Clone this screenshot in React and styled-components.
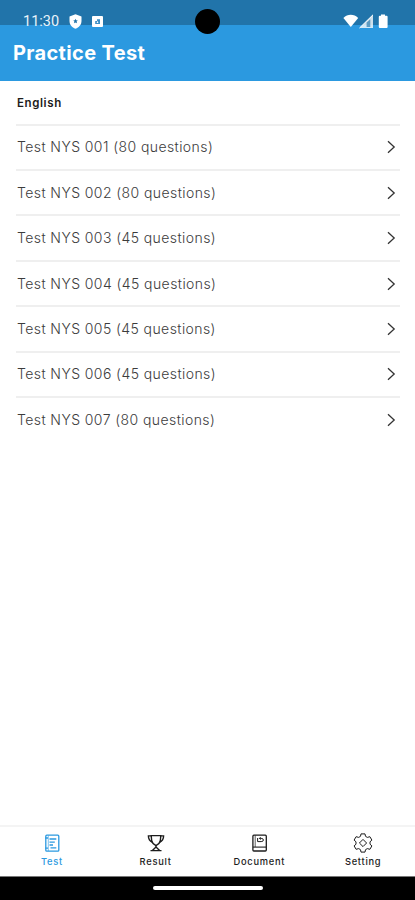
import React from 'react';
import styled, { createGlobalStyle } from 'styled-components';

const COLORS = {
  primary: '#2b99e0',
  statusBar: '#2174aa',
  text: '#3c3c3c',
  dark: '#1c1c1c',
  divider: '#efefef',
  white: '#ffffff',
};

const tests = [
  { id: '001', questions: 80 },
  { id: '002', questions: 80 },
  { id: '003', questions: 45 },
  { id: '004', questions: 45 },
  { id: '005', questions: 45 },
  { id: '006', questions: 45 },
  { id: '007', questions: 80 },
];

const App = () => {
  return (
    <>
      <GlobalStyle />
      <Screen>
        <StatusBar>
          <StatusGroup>
            <Clock>11:30</Clock>
            <ShieldIcon />
            <AppIcon />
          </StatusGroup>
          <Camera />
          <SignalIcons />
        </StatusBar>
        <Header>
          <Title>Practice Test</Title>
        </Header>
        <Content>
          <SectionTitle>English</SectionTitle>
          <TestList>
            {tests.map((test) => (
              <TestRow key={test.id}>
                <TestName>{`Test NYS ${test.id} (${test.questions} questions)`}</TestName>
                <Chevron />
              </TestRow>
            ))}
          </TestList>
        </Content>
        <TabBar>
          {tabs.map(({ label, Icon, active }) => (
            <Tab key={label} $active={active}>
              <Icon />
              <TabLabel>{label}</TabLabel>
            </Tab>
          ))}
        </TabBar>
        <SystemBar>
          <HomeIndicator />
        </SystemBar>
      </Screen>
    </>
  );
};

const ShieldIcon = () => (
  <svg width="13" height="15" viewBox="0 0 13 15">
    <path
      fillRule="evenodd"
      fill="#fff"
      d="M6.5 0.3 L12.5 2.6 V7 C12.5 10.8 10 13.5 6.5 14.7 C3 13.5 0.5 10.8 0.5 7 V2.6 Z M6.5 4.7 L7.2 6.3 L8.8 6.5 L7.6 7.6 L8 9.2 L6.5 8.4 L5 9.2 L5.4 7.6 L4.2 6.5 L5.8 6.3 Z"
    />
  </svg>
);

const AppIcon = () => (
  <svg width="11" height="11" viewBox="0 0 11 11">
    <rect width="11" height="11" rx="1" fill="#fff" />
    <path d="M3.2 8 V5 H5 V3.2 H8 V8 Z" fill="#3d8fc6" />
    <path d="M4.6 7 L5.5 4.8 L6.4 7 Z" fill="#fff" />
  </svg>
);

const SignalIcons = () => (
  <svg width="46" height="15" viewBox="0 0 46 15">
    <path d="M0.4 4 C4.5 -0.2 11 -0.2 15.2 4 L7.8 13 Z" fill="#fff" />
    <path d="M16.5 14 L30 0.8 V14 Z" fill="#fff" fillOpacity="0.78" />
    <path d="M23.6 13 V8.5 L27.3 5.2 V13 Z" fill={COLORS.statusBar} fillOpacity="0.65" />
    <path d="M16.5 14 L30 0.8" stroke="#fff" />
    <path
      d="M38 0.4 H42 V1.7 H43.6 Q44.6 1.7 44.6 2.7 V13 Q44.6 14 43.6 14 H36.8 Q35.8 14 35.8 13 V2.7 Q35.8 1.7 36.8 1.7 H38 Z"
      fill="#fff"
    />
  </svg>
);

const Chevron = () => (
  <svg width="9" height="14" viewBox="0 0 9 14" fill="none">
    <path d="M1 1.2 L7.2 7 L1 12.8" stroke="#333" strokeWidth="1.3" />
  </svg>
);

const TestIcon = () => (
  <svg width="20" height="20" viewBox="0 0 20 20" fill="none" stroke="currentColor" strokeWidth="1.3">
    <rect x="3.8" y="2.2" width="13" height="16" rx="1" />
    <path d="M6.3 2.5 V18" strokeWidth="0.6" />
    <path d="M3.4 5 H6 M3.4 15.2 H6" />
    <path d="M7.5 6 H14.3 M7.5 9.2 H12.8 M7.5 12 H11 M8.5 14.8 H14.3" />
  </svg>
);

const TrophyIcon = () => (
  <svg width="20" height="20" viewBox="0 0 20 20" fill="none" stroke="currentColor" strokeWidth="1.4">
    <path d="M5.2 2.6 H14.8 L14.3 8 Q13.5 11 10 12.7 Q6.5 11 5.7 8 Z" />
    <path d="M5.3 2.9 H2.4 Q2.4 7.2 6.5 9.4 M14.7 2.9 H17.6 Q17.6 7.2 13.5 9.4" />
    <path d="M10 12.3 V14.5 M10 14 L6.4 17.5 M10 14 L13.6 17.5 M4.5 17.6 H15.5" />
  </svg>
);

const DocumentIcon = () => (
  <svg width="20" height="20" viewBox="0 0 20 20" fill="none" stroke="currentColor" strokeWidth="1.3">
    <rect x="3.9" y="2.2" width="13.4" height="15.8" rx="1" />
    <path d="M6.2 2.4 V14" strokeWidth="0.7" />
    <path d="M3.9 14.1 H17" strokeWidth="1.1" />
    <path d="M8.6 5 V8.6 H12.2 Q14.4 8.6 14.4 7 Q14.4 5.4 12.2 5.4 H10.4 M11.6 4.2 L10.4 5.4 L11.6 6.6" strokeWidth="1" />
  </svg>
);

const SettingIcon = () => (
  <svg width="20" height="20" viewBox="0 0 20 20" fill="none" stroke="currentColor" strokeWidth="1" strokeLinejoin="round">
    <path d="M8 0.9 H12 L12.5 3.3 L14.3 4.4 L16.9 3.7 L18.9 7.1 L17 8.8 V11.2 L18.9 12.9 L16.9 16.3 L14.3 15.6 L12.5 16.7 L12 19.1 H8 L7.5 16.7 L5.7 15.6 L3.1 16.3 L1.1 12.9 L3 11.2 V8.8 L1.1 7.1 L3.1 3.7 L5.7 4.4 L7.5 3.3 Z" />
    <path d="M10 6.4 L13.6 10 L10 13.6 L6.4 10 Z" />
  </svg>
);

const tabs = [
  { label: 'Test', Icon: TestIcon, active: true },
  { label: 'Result', Icon: TrophyIcon },
  { label: 'Document', Icon: DocumentIcon },
  { label: 'Setting', Icon: SettingIcon },
];

const GlobalStyle = createGlobalStyle`
  * {
    box-sizing: border-box;
  }
  body {
    margin: 0;
    background: ${COLORS.white};
    font-family: Inter, 'Liberation Sans', sans-serif;
  }
`;

const Screen = styled.div`
  position: relative;
  display: flex;
  flex-direction: column;
  height: 900px;
  overflow: hidden;
`;

/* the status icons hang a few pixels over the header below */
const StatusBar = styled.div`
  position: relative;
  z-index: 1;
  display: flex;
  align-items: flex-start;
  justify-content: space-between;
  height: 25px;
  padding: 14px 26px 0 23px;
  background: ${COLORS.statusBar};
`;

const StatusGroup = styled.div`
  display: flex;
  align-items: center;
  height: 15px;
  gap: 10px;
`;

const Clock = styled.span`
  width: 36px;
  font-family: Roboto, sans-serif;
  font-size: 14.5px;
  line-height: 16px;
  white-space: nowrap;
  color: #e8f3fa;
`;

const Camera = styled.div`
  position: absolute;
  top: 9px;
  left: 195px;
  width: 25px;
  height: 25px;
  border-radius: 50%;
  background: #000;
`;

const Header = styled.header`
  height: 56px;
  padding: 14px 13px 0;
  background: ${COLORS.primary};
`;

const Title = styled.h1`
  margin: 0;
  font-size: 20px;
  font-weight: 700;
  line-height: 28px;
  letter-spacing: 0.35px;
  color: ${COLORS.white};
`;

const Content = styled.main`
  flex: 1;
  padding: 0 15px 0 16px;
`;

const SectionTitle = styled.h2`
  height: 42.5px;
  margin: 0;
  padding-left: 1px;
  font-size: 11.5px;
  font-weight: 600;
  line-height: 44px;
  letter-spacing: 0.6px;
  color: ${COLORS.dark};
`;

const TestList = styled.ul`
  margin: 0;
  padding: 0;
  list-style: none;
`;

const TestRow = styled.li`
  display: flex;
  align-items: center;
  justify-content: space-between;
  height: 45.45px;
  padding: 0 4px 0 1px;
  border-top: 2px solid ${COLORS.divider};
`;

const TestName = styled.span`
  font-size: 14px;
  line-height: 16px;
  font-weight: 300;
  letter-spacing: 0.42px;
  color: ${COLORS.text};
`;

const TabBar = styled.nav`
  display: grid;
  grid-template-columns: repeat(4, 1fr);
  height: 51px;
  border-top: 2px solid #f4f4f4;
`;

const Tab = styled.div`
  display: flex;
  flex-direction: column;
  align-items: center;
  padding-top: 6px;
  color: ${({ $active }) => ($active ? COLORS.primary : COLORS.dark)};
`;

const TabLabel = styled.span`
  margin-top: 2px;
  font-size: 9.3px;
  font-weight: 500;
  line-height: 14px;
  letter-spacing: 0.75px;
`;

const SystemBar = styled.footer`
  display: flex;
  justify-content: center;
  height: 24px;
  padding-top: 9px;
  border-top: 1px solid #777;
  background: #000;
`;

const HomeIndicator = styled.div`
  width: 110px;
  height: 4px;
  border-radius: 2px;
  background: ${COLORS.white};
`;

export default App;
